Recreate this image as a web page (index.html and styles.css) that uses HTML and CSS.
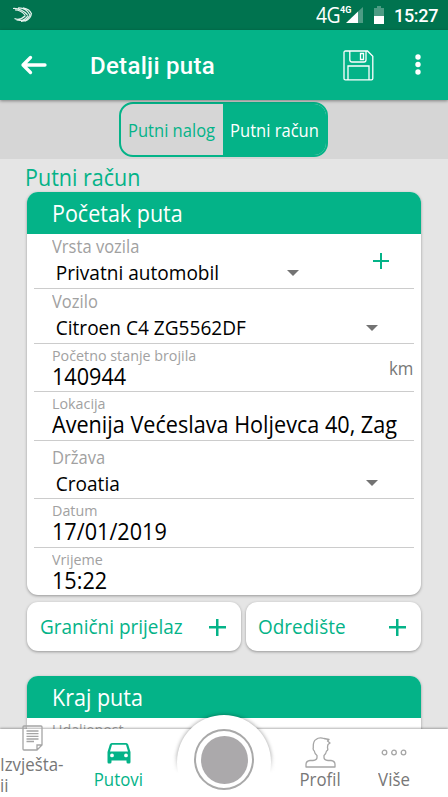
FILE: index.html
```html
<!DOCTYPE html>
<html lang="hr">
<head>
<meta charset="utf-8">
<title>Detalji puta</title>
<link rel="stylesheet" href="styles.css">
</head>
<body>
<div class="screen">
  <div class="status">
    <svg class="wing" width="20" height="16" viewBox="0 0 20 16" fill="none" stroke="#e3f1ec" stroke-width="1.200"><path d="M0 1.500Q8 1 14.500 8M2 3Q8 3 12 8M5 1Q13 .5 17 8M10 .8Q17 2 18.500 7M1.500 11.500Q7 14 12.500 8.500M3.500 13Q11 15 15 8.500M8 14.500Q14 14 17 8M12 14.300Q18 12 18.500 6"/></svg>
    <span class="net">4G</span><span class="net-small">4G</span>
    <svg class="signal" width="17" height="17" viewBox="0 0 17 17"><path fill="#4d9c84" d="M17 0V16H12V4.500Z"/><path fill="#fff" d="M0 16L12 4.500V16Z"/></svg>
    <svg class="battery" width="10" height="18" viewBox="0 0 10 18"><path fill="#4d9c84" d="M3 0H7V2H10V10H0V2H3Z"/><path fill="#fff" d="M0 10H10V18H0Z"/></svg>
    <span class="clock">15:27</span>
  </div>
  <header class="appbar">
    <svg class="back" width="28" height="20" viewBox="0 0 28 20" fill="none" stroke="#fff" stroke-width="3.300" stroke-linecap="round" stroke-linejoin="round"><path d="M25 10H3M10.500 2.500L3 10L10.500 17.500"/></svg>
    <h1 class="title">Detalji puta</h1>
    <svg class="save" width="31" height="31" viewBox="0 0 31 31" fill="none" stroke="#fff" stroke-width="1.300"><path d="M2.500 1H24.500L29.800 6.300V28.500Q29.800 29.800 28.500 29.800H2.500Q1 29.800 1 28.500V2.500Q1 1 2.500 1ZM6.800 1V9.500Q6.800 12 9 12H21Q23 12 23 9.800V1M17.500 3.500H20.500V9.500H17.500ZM5 29.800V16H26V29.800"/></svg>
    <svg class="more" width="6" height="22" viewBox="0 0 6 22" fill="#fff"><circle cx="3" cy="3" r="2.700"/><circle cx="3" cy="10.500" r="2.700"/><circle cx="3" cy="18" r="2.700"/></svg>
  </header>
  <div class="tabs">
    <div class="toggle"><span class="tab"><span class="tab-text">Putni nalog</span></span><span class="tab active"><span class="tab-text">Putni račun</span></span></div>
  </div>
  <main class="content">
    <h2 class="section">Putni račun</h2>
    <section class="card">
      <h3 class="card-head"><span class="head-text">Početak puta</span></h3>
      <div class="field pick h55"><div class="label">Vrsta vozila</div><div class="value">Privatni automobil</div><i class="caret near"></i><i class="plus thin"></i></div>
      <div class="field pick h55"><div class="label">Vozilo</div><div class="value">Citroen C4 ZG5562DF</div><i class="caret"></i></div>
      <div class="field text h48"><div class="label">Početno stanje brojila</div><div class="value">140944</div><span class="unit">km</span></div>
      <div class="field text h49"><div class="label">Lokacija</div><div class="value">Avenija Većeslava Holjevca 40, Zag</div></div>
      <div class="field pick h58"><div class="label">Država</div><div class="value">Croatia</div><i class="caret"></i></div>
      <div class="field text h49"><div class="label">Datum</div><div class="value">17/01/2019</div></div>
      <div class="field text h47"><div class="label">Vrijeme</div><div class="value">15:22</div></div>
    </section>
    <div class="actions">
      <div class="action wide"><span class="action-text">Granični prijelaz</span><i class="plus"></i></div>
      <div class="action"><span class="action-text">Odredište</span><i class="plus"></i></div>
    </div>
    <section class="card end">
      <h3 class="card-head"><span class="head-text">Kraj puta</span></h3>
      <div class="field text h48"><div class="label">Udaljenost</div></div>
    </section>
  </main>
  <nav class="nav">
    <div class="item reports">
      <svg width="21" height="26" viewBox="0 0 21 26" fill="none" stroke="#a5a5a5" stroke-width="1.300"><path d="M2 1H19Q20 1 20 2V20L15 25H2Q1 25 1 24V2Q1 1 2 1ZM20 20H15V25M4.500 6H16.500M4.500 8.700H16.500M4.500 11.400H16.500M4.500 14H16.500M4.500 16.500H12"/></svg>
      <span class="nav-label">Izvješta-<br>ji</span>
    </div>
    <div class="item trips">
      <svg width="24" height="21" viewBox="0 0 24 21"><path fill="#04b388" fill-rule="evenodd" d="M4.800 0H19.200Q20.600 0 21.200 1.500L23.500 9V19Q23.500 20.500 22.200 20.500H21Q19.500 20.500 19.500 19V17.500H4.500V19Q4.500 20.500 3 20.500H1.700Q.5 20.500 .5 19V9L2.800 1.500Q3.400 0 4.800 0ZM5 1.700L3 8.500H21L19 1.700ZM5 10.500A1.900 1.900 0 1 0 5 14.300A1.900 1.900 0 1 0 5 10.500ZM19 10.500A1.900 1.900 0 1 0 19 14.300A1.900 1.900 0 1 0 19 10.500Z"/></svg>
      <span class="nav-label">Putovi</span>
    </div>
    <div class="item profile">
      <svg width="31" height="31" viewBox="0 0 31 31" fill="none" stroke="#a5a5a5" stroke-width="1.300" stroke-linejoin="round"><path d="M1 30V27.500Q1 24 5 23.500H8Q12 23 12 20.500V18.500Q9.700 17 9.300 14Q7.700 13 8.300 10.500Q8 4 11 2.500Q14 0 19 1.500L24 2.500L22.500 4L25 6L23 7.500Q22.500 9 22.500 11Q23.500 13 21.500 14Q21 17 19 18.500V20.500Q19 23 23 23.500H26Q30 24 30 27.500V30Z"/></svg>
      <span class="nav-label">Profil</span>
    </div>
    <div class="item other">
      <svg width="26" height="7" viewBox="0 0 26 7" fill="none" stroke="#a5a5a5" stroke-width="1.300"><circle cx="3.500" cy="3.500" r="2.300"/><circle cx="13" cy="3.500" r="2.300"/><circle cx="22.500" cy="3.500" r="2.300"/></svg>
      <span class="nav-label">Više</span>
    </div>
  </nav>
  <div class="bump"></div>
  <div class="nav-cover"></div>
  <div class="record"><div class="record-dot"></div></div>
</div>
</body>
</html>
```

FILE: styles.css
```css
* { box-sizing: border-box; }
body { margin: 0; font-family: "Open Sans", "Noto Sans", sans-serif; }
h1, h2, h3 { margin: 0; font-weight: 400; }
.screen { position: relative; width: 448px; height: 797px; overflow: hidden; background: #e5e5e5; display: flex; flex-direction: column; }
svg { display: block; flex: none; }

/* Condensed lettering shared by all form and navigation text */
.section, .head-text, .label, .value, .unit, .tab-text, .action-text, .nav-label { transform: scaleX(.935); transform-origin: 0 50%; }
.head-text, .tab-text, .action-text { display: inline-block; }

.status { height: 30px; flex: none; background: #00734f; color: #fff; display: flex; align-items: flex-start; }
.wing { margin: 7px 0 0 13px; }
.net { margin: 2px 0 0 283px; width: 24px; font-size: 22.5px; line-height: 26px; letter-spacing: -.8px; transform: scaleX(.86); transform-origin: 0 50%; white-space: nowrap; }
.net-small { width: 6px; margin-top: 4px; font: 700 9px/12px Roboto, sans-serif; white-space: nowrap; }
.signal { margin: 7px 11px 0 0; }
.battery { margin: 6px 10px 0 0; }
.clock { font: 500 18px/32px Roboto, sans-serif; letter-spacing: -.3px; }

.appbar { position: relative; z-index: 2; height: 70px; flex: none; background: #04b388; display: flex; align-items: center; box-shadow: 0 1px 3px rgba(0,0,0,.4); }
.back { margin: -1px 0 0 20px; }
.title { margin: 2px 0 0 42px; width: 253px; color: #fff; font: 500 24px/30px Roboto, sans-serif; letter-spacing: .3px; }
.more { margin-left: 41px; }

.tabs { height: 59px; flex: none; background: #d6d6d6; display: flex; justify-content: center; }
.toggle { width: 209px; height: 55px; margin: 2px 1px 0 0; border: 2px solid #04b388; border-radius: 14px; overflow: hidden; display: flex; font-size: 17.7px; color: #04b388; white-space: nowrap; }
.tab { width: 102px; flex: none; display: flex; align-items: center; justify-content: center; }
.tab.active { width: 102px; flex: 1; padding-right: 1px; background: #04b388; color: #fff; }
.tab-text { transform-origin: 50% 50%; }

.content { flex: 1; padding: 4px 27.500px 0 27px; }
.section { height: 29px; margin-left: -2px; font-size: 23px; line-height: 29px; color: #04b388; }
.card { background: #fff; border-radius: 11px; overflow: hidden; box-shadow: 0 1px 3px rgba(0,0,0,.35); }
.card-head { height: 42px; padding-left: 25px; background: #04b388; color: #fff; font-size: 23px; line-height: 43px; }
.field { position: relative; margin: 0 6.500px 0 7px; padding-left: 18px; border-bottom: 1px solid #ccc; white-space: nowrap; }
.field:last-child { border-bottom: 0; }
.h55 { height: 55px; }
.h48 { height: 48px; }
.h49 { height: 49px; }
.h47 { height: 47px; }
.h58 { height: 58px; }
.label { color: #a1a1a1; }
.pick .label { font-size: 17.7px; line-height: 24px; }
.pick .value { padding: 1px 0 0 4px; font-size: 20.4px; line-height: 26px; }
.h58 .label { padding-top: 4px; }
.text .label { padding-top: 3px; font-size: 15.3px; line-height: 17px; }
.text .value { font-size: 23px; line-height: 25px; transform: scaleX(.94); }
.value { color: #000; }
.unit { position: absolute; right: -1px; top: 12px; font-size: 18px; line-height: 24px; color: #777; }
.caret { position: absolute; right: 36px; bottom: 12px; border: 6px solid transparent; border-top-color: #737373; border-bottom: 0; }
.plus { width: 17px; height: 17px; background: linear-gradient(#04b388, #04b388) center / 17px 2.500px no-repeat, linear-gradient(#04b388, #04b388) center / 2.500px 17px no-repeat; }
.plus.thin { position: absolute; right: 25px; top: 19px; width: 16px; height: 16px; background-size: 16px 2px, 2px 16px; }
.caret.near { right: 115px; }

.actions { margin-top: 7px; display: flex; gap: 5px; }
.action { width: 175px; height: 49px; padding: 2px 15px 0 12.500px; display: flex; align-items: center; justify-content: space-between; background: #fff; border-radius: 11px; box-shadow: 0 1px 3px rgba(0,0,0,.35); color: #04b388; font-size: 20.300px; white-space: nowrap; }
.action-text { margin: -3px -10px 0 0; }
.action.wide { width: 213.500px; padding-left: 13px; }
.end { margin-top: 25px; }

.nav { position: absolute; left: 0; top: 729px; z-index: 3; width: 448px; height: 68px; background: #fff; box-shadow: 0 -1px 2px rgba(0,0,0,.3); display: flex; color: #777; }
.item { display: flex; flex-direction: column; align-items: center; font-size: 18px; line-height: 21px; white-space: nowrap; }
.nav-label { transform-origin: 50% 50%; }
.reports { width: 72px; margin: -4px -7px 0 0; height: 67px; overflow: hidden; align-items: flex-start; }
.reports svg { margin-left: 22px; }
.reports .nav-label { margin-top: 3px; line-height: 20.500px; transform-origin: 0 50%; }
.trips { width: 107px; padding-top: 14px; color: #04b388; }
.trips .nav-label { margin-top: 5px; }
.profile { margin-left: 104px; width: 88px; padding-top: 8px; }
.profile .nav-label { margin-top: 1px; }
.other { width: 60px; padding-top: 20px; }
.other .nav-label { margin-top: 13px; }
.bump { position: absolute; left: 177px; top: 715px; z-index: 3; width: 94px; height: 94px; border-radius: 50%; background: #fff; box-shadow: 0 0 4px rgba(0,0,0,.4); }
.nav-cover { position: absolute; left: 170px; top: 755px; z-index: 4; width: 108px; height: 42px; background: linear-gradient(rgba(255,255,255,0), #fff 18px); }
.record { position: absolute; left: 194px; top: 729px; z-index: 5; width: 60px; height: 61px; border: 2px solid #a9a9a9; border-radius: 50%; background: #fff; display: flex; align-items: center; justify-content: center; }
.record-dot { width: 47px; height: 48px; border-radius: 50%; background: #aba9ab; }
```
